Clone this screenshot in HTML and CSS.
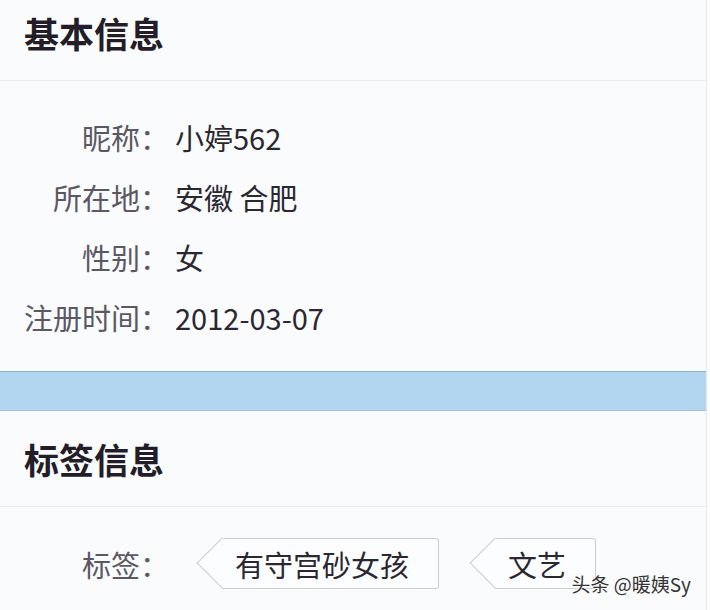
FILE: index.html
```html
<!DOCTYPE html>
<html>
<head>
    <meta charset="utf-8">
    <title>个人资料</title>
    <link rel="stylesheet" href="styles.css">
</head>
<body>
    <div class="page">

        <div class="section-head first">
            <h2>基本信息</h2>
        </div>

        <div class="info">
            <div class="row">
                <span class="label">昵称：</span>
                <span class="value">小婷562</span>
            </div>
            <div class="row">
                <span class="label">所在地：</span>
                <span class="value">安徽 合肥</span>
            </div>
            <div class="row">
                <span class="label">性别：</span>
                <span class="value">女</span>
            </div>
            <div class="row">
                <span class="label">注册时间：</span>
                <span class="value">2012-03-07</span>
            </div>
        </div>

        <div class="band"></div>

        <div class="section-head second">
            <h2>标签信息</h2>
        </div>

        <div class="tags-row">
            <span class="label">标签：</span>
            <div class="tags">
                <span class="tag">有守宫砂女孩</span>
                <span class="tag">文艺</span>
            </div>
        </div>

        <!-- watermark -->
        <div class="watermark">头条 @暖姨Sy</div>
    </div>
</body>
</html>
```

FILE: styles.css
```css
body {
    margin: 0;
    padding: 0;
    background: #ffffff;
    font-family: "Noto Sans CJK SC", "Noto Sans", sans-serif;
}

.page {
    position: relative;
    width: 706px;
    height: 610px;
    overflow: hidden;
    background: #f9fbfd;
    border-right: 1px solid #e6e9ee;
}

.section-head {
    display: flex;
    align-items: center;
    padding-left: 24px;
    border-bottom: 1px solid #e8ecf1;
}

.section-head.first {
    height: 65px;
    padding-bottom: 15px;
}

.section-head.second {
    height: 95px;
}

.section-head h2 {
    margin: 0;
    font-size: 35px;
    font-weight: bold;
    color: #221d27;
    line-height: 1;
}

.info {
    padding: 26px 0 24px;
}

.row {
    display: flex;
    align-items: center;
    height: 60px;
    font-size: 29px;
}

.label {
    width: 169px;
    text-align: right;
    color: #5c5862;
    font-size: 29px;
}

.value {
    margin-left: 6px;
    color: #2b2730;
}

.band {
    height: 38px;
    background: #b2d5f0;
    border-top: 1px solid #8fb1c9;
    border-bottom: 1px solid #a3c2d8;
}

.tags-row {
    display: flex;
    align-items: center;
    padding-top: 31px;
}

.tags {
    display: flex;
    gap: 56px;
    margin-left: 53px;
}

.tag {
    position: relative;
    z-index: 0;
    display: flex;
    align-items: center;
    height: 49px;
    padding: 0 29px 0 13px;
    font-size: 29px;
    color: #2b2730;
    background: #fcfdfe;
    border: 1px solid #c9ced3;
    border-left: none;
    border-radius: 0 3px 3px 0;
}

.tag::before {
    content: "";
    position: absolute;
    z-index: -1;
    left: -18px;
    top: 6px;
    width: 35px;
    height: 35px;
    background: #fcfdfe;
    border-left: 1px solid #c9ced3;
    border-bottom: 1px solid #c9ced3;
    transform: rotate(45deg);
}

.watermark {
    position: absolute;
    right: 15px;
    bottom: 13px;
    font-size: 19px;
    color: #333333;
    text-shadow: 0 0 2px #ffffff, 0 0 2px #ffffff;
}
```
